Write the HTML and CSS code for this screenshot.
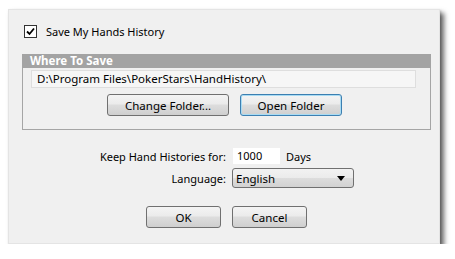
FILE: index.html
```html
<!DOCTYPE html>
<html>
<head>
<meta charset="utf-8">
<link rel="stylesheet" href="styles.css">
</head>
<body>
<div class="dialog">
  <label class="check-row">
    <span class="checkbox"><svg width="9" height="9" viewBox="0 0 9 9"><path d="M1 4.5 L3.5 7 L8 1.5" fill="none" stroke="#000" stroke-width="1.8"/></svg></span>
    <span>Save My Hands History</span>
  </label>
  <div class="group">
    <div class="group-head">Where To Save</div>
    <div class="group-body">
      <div class="path">D:\Program Files\PokerStars\HandHistory\</div>
      <div class="btn-row">
        <button class="btn btn-change">Change Folder...</button>
        <button class="btn btn-open">Open Folder</button>
      </div>
    </div>
  </div>
  <div class="form">
    <div class="lbl">Keep Hand Histories for:</div>
    <div class="field"><span class="num">1000</span><span class="days">Days</span></div>
    <div class="lbl">Language:</div>
    <div class="field"><div class="select"><span>English</span><svg width="8" height="5" viewBox="0 0 8 5"><path d="M0 0 H8 L4 5 Z" fill="#000"/></svg></div></div>
  </div>
  <div class="actions">
    <button class="btn btn-ok">OK</button>
    <button class="btn btn-cancel">Cancel</button>
  </div>
</div>
</body>
</html>
```
FILE: styles.css
```css
html, body { margin: 0; padding: 0; background: #fff; }
body {
  font-family: "Noto Sans", "Open Sans", sans-serif;
  font-size: 11px;
  color: #000;
  padding: 9px 0 0 8px;
}
.dialog {
  width: 432px;
  height: 235px;
  box-sizing: border-box;
  background: #f0f0f0;
  border: 1px solid #e4e4e4;
  box-shadow: 4px 4px 5px rgba(0,0,0,0.6), 1px 1px 2px rgba(0,0,0,0.15);
  padding: 14px 0 0 13px;
  position: relative;
}
.check-row {
  display: flex;
  align-items: center;
  gap: 9px;
  height: 14px;
  margin-left: 2px;
}
.checkbox {
  width: 11px; height: 11px;
  border: 1px solid #333;
  background: #fff;
  display: flex; align-items: center; justify-content: center;
}
.group {
  margin-top: 16px;
  width: 409px;
}
.group-head {
  background: #a3a3a3;
  color: #fff;
  font-weight: bold;
  height: 14px;
  line-height: 14px;
  padding-left: 8px;
  font-size: 11.5px;
}
.group-body {
  border: 1px solid #a5a5a5;
  border-top: none;
  height: 59px;
  padding: 2px 0 0 8px;
}
.path {
  width: 378px;
  height: 16px;
  line-height: 16px;
  background: #f6f6f6;
  border: 1px solid #dedede;
  padding-left: 5px;
  box-sizing: content-box;
  white-space: nowrap;
  font-size: 11.5px;
}
.btn-row {
  display: flex;
  gap: 11px;
  margin-top: 6px;
  margin-left: 76px;
}
.btn {
  font: inherit;
  font-size: 11.5px;
  height: 22px;
  padding: 0;
  border: 1px solid #707070;
  border-radius: 3px;
  background: linear-gradient(#f4f4f4 0%, #ebebeb 45%, #dddddd 50%, #cfcfcf 100%);
  color: #000;
}
.btn-change { width: 122px; }
.btn-open { width: 102px; border-color: #3c7fb1; box-shadow: inset 0 0 0 1px #a8dbf3; }
.form {
  display: grid;
  grid-template-columns: 204px auto;
  column-gap: 6px;
  row-gap: 4px;
  margin-top: 18px;
  align-items: center;
}
.lbl { text-align: right; }
.field { display: flex; align-items: center; }
.num {
  background: #fff;
  width: 43px;
  height: 16px;
  line-height: 16px;
  padding-left: 4px;
  margin-left: 1px;
}
.days { margin-left: 6px; }
.select {
  width: 122px;
  height: 20px;
  box-sizing: border-box;
  border: 1px solid #707070;
  border-radius: 3px;
  background: linear-gradient(#f2f2f2 0%, #ebebeb 50%, #dddddd 51%, #d2d2d2 100%);
  display: flex; align-items: center; justify-content: space-between;
  padding: 0 8px 0 3px;
  font-size: 11.5px;
}
.actions {
  display: flex;
  gap: 11px;
  margin-top: 18px;
  margin-left: 124px;
}
.btn-ok, .btn-cancel { width: 75px; }
```
